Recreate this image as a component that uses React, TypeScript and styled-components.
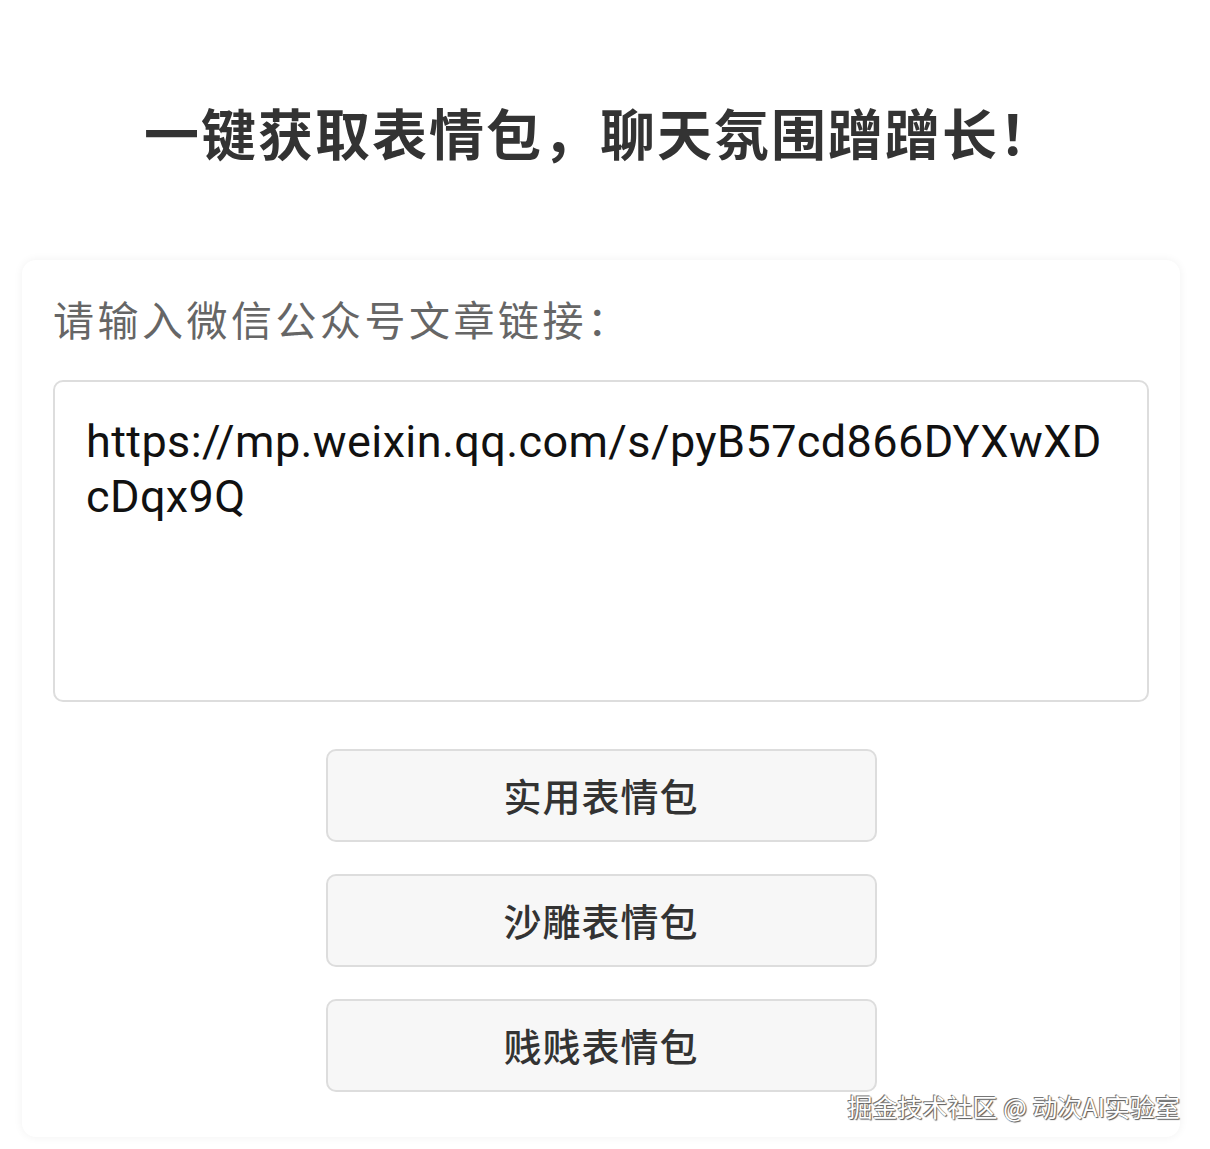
import React, { useState } from "react";
import styled, { createGlobalStyle } from "styled-components";

const GlobalStyle = createGlobalStyle`
    html, body {
        margin: 0;
        padding: 0;
        background: #ffffff;
        font-family: "Noto Sans CJK SC", "Noto Sans", sans-serif;
    }
    * {
        box-sizing: border-box;
    }
`;

const types = ["实用表情包", "沙雕表情包", "贱贱表情包"];

export default function App() {
    const [url, setUrl] = useState("https://mp.weixin.qq.com/s/pyB57cd866DYXwXDcDqx9Q");

    return (
        <Page>
            <GlobalStyle />
            <Title>一键获取表情包，聊天氛围蹭蹭长！</Title>
            <Card>
                <Label>请输入微信公众号文章链接：</Label>
                <LinkInput value={url} onChange={(e) => setUrl(e.target.value)} />
                <ButtonList>
                    {types.map((t) => (
                        <TypeButton key={t}>{t}</TypeButton>
                    ))}
                </ButtonList>
                <Watermark>掘金技术社区 @ 动次AI实验室</Watermark>
            </Card>
        </Page>
    );
}

const Page = styled.div`
    width: 1210px;
    min-height: 1149px;
    padding: 92px 22px 12px;
`;

const Title = styled.h1`
    margin: 0 0 90px;
    text-align: center;
    font-size: 55px;
    line-height: 78px;
    font-weight: 700;
    color: #333333;
    letter-spacing: 2px;
    padding-right: 10px;
`;

const Card = styled.div`
    position: relative;
    width: 1158px;
    height: 877px;
    padding: 26px 31px 0;
    background: #ffffff;
    border-radius: 14px;
    box-shadow: 0 0 10px rgba(0, 0, 0, 0.06);
`;

const Label = styled.div`
    font-size: 41px;
    line-height: 64px;
    letter-spacing: 3.5px;
    color: #666666;
    margin-bottom: 30px;
`;

const LinkInput = styled.textarea`
    display: block;
    width: 1096px;
    height: 322px;
    padding: 32px 32px 28px 31px;
    border: 2px solid #dddddd;
    border-radius: 10px;
    font-family: Roboto, "Noto Sans", sans-serif;
    font-size: 45px;
    line-height: 55px;
    letter-spacing: 0.4px;
    color: #111111;
    resize: none;
    outline: none;
    word-break: break-all;
    background: #ffffff;
`;

const ButtonList = styled.div`
    display: flex;
    flex-direction: column;
    align-items: center;
    gap: 32px;
    margin-top: 47px;
`;

const TypeButton = styled.button`
    width: 551px;
    height: 93px;
    border: 2px solid #dddddd;
    border-radius: 10px;
    background: #f7f7f7;
    font-family: "Noto Sans CJK SC", sans-serif;
    font-size: 38px;
    font-weight: 500;
    color: #333333;
    letter-spacing: 1px;
    padding-bottom: 4px;
    cursor: pointer;
`;

const Watermark = styled.div`
    position: absolute;
    right: 0;
    bottom: 15px;
    font-family: "Noto Sans CJK SC", sans-serif;
    font-size: 25px;
    line-height: 32px;
    color: #ffffff;
    text-shadow: -1px -1px 0 #777, 1px 1px 1px #555, 0 0 1px #666;
`;
